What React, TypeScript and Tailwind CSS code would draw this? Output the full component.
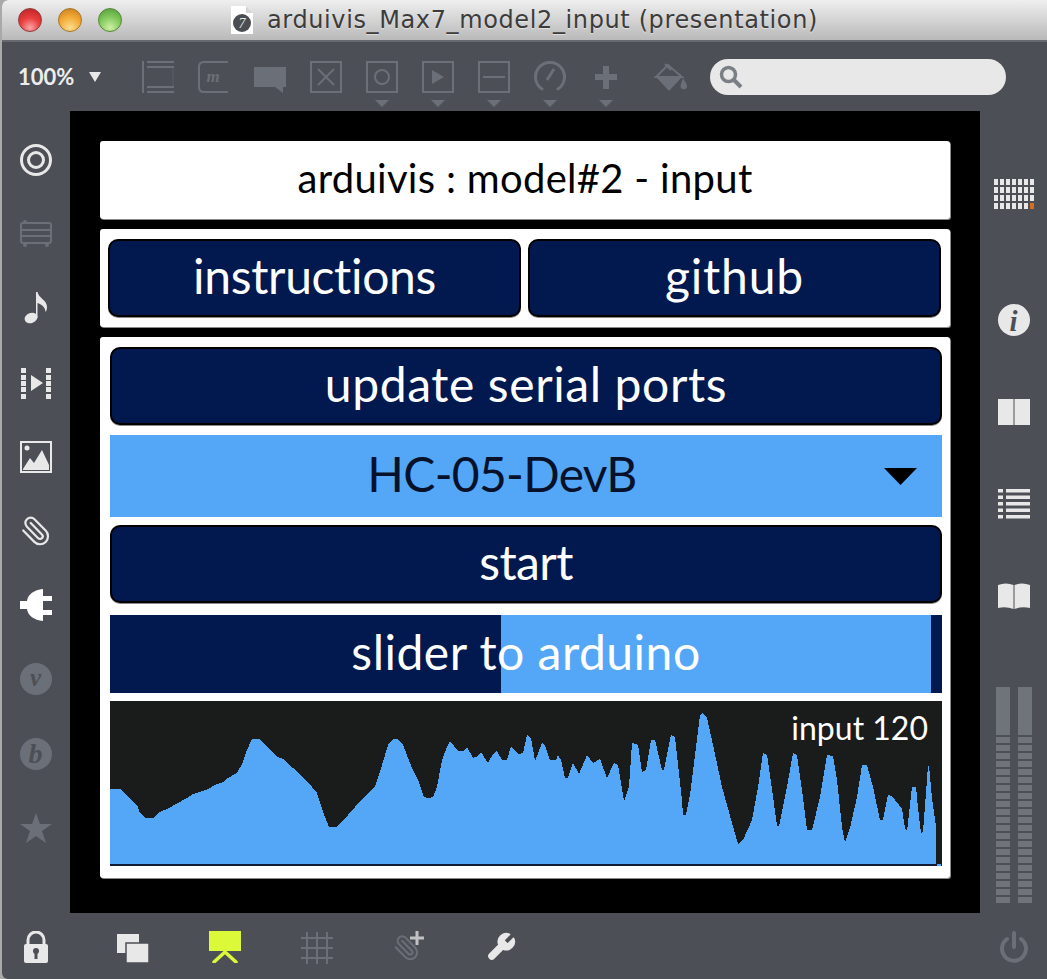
import React from "react";

const DIM = "#6b6f77";
const LIT = "#e8e8e8";
const SERIF = '"Liberation Serif", serif';

const wavePts: [number, number][] = [[0,88],[10,88],[18,96],[27,104],[30,112],[35,117],[43,117],[50,111],[57,108],[77,97],[83,93],[98,88],[105,84],[113,81],[118,77],[127,72],[133,61],[137,49],[142,38],[150,38],[157,46],[167,56],[173,58],[183,67],[192,76],[198,81],[207,92],[213,111],[219,126],[227,126],[238,114],[253,97],[265,86],[272,64],[278,44],[283,38],[288,38],[293,44],[302,67],[309,81],[314,96],[318,97],[323,96],[327,86],[332,59],[337,46],[340,40],[348,50],[353,50],[357,46],[363,57],[368,55],[371,51],[378,62],[383,53],[387,50],[392,59],[397,59],[401,45],[408,53],[413,52],[417,34],[421,37],[425,60],[432,42],[435,44],[440,59],[446,59],[448,54],[451,59],[455,77],[458,77],[463,62],[469,73],[477,54],[483,62],[490,58],[497,77],[504,62],[508,64],[514,100],[519,86],[522,42],[528,44],[532,71],[536,69],[541,39],[545,39],[552,69],[554,69],[561,34],[565,36],[572,99],[573,114],[576,114],[580,94],[590,14],[593,12],[597,17],[603,44],[612,86],[622,122],[628,143],[633,139],[642,119],[648,86],[653,52],[657,54],[661,81],[667,125],[669,125],[677,86],[683,52],[687,54],[692,89],[697,129],[702,129],[710,96],[717,54],[723,55],[727,79],[732,126],[735,142],[740,127],[747,96],[752,64],[757,64],[763,86],[770,119],[773,119],[778,94],[782,95],[792,108],[795,127],[797,130],[802,86],[806,86],[808,107],[811,132],[813,131],[818,65],[819,64],[822,97],[826,126],[826,163],[832,163]];
const wavePoints = "0,163 " + wavePts.map((p) => p.join(",")).join(" ");

const Ico = ({ w = 32, h = 32, children }: { w?: number; h?: number; children: React.ReactNode }) => (
  <svg width={w} height={h} viewBox={`0 0 ${w} ${h}`} className="block shrink-0">{children}</svg>
);

const FrameIco = ({ children }: { children?: React.ReactNode }) => (
  <Ico><rect x="1" y="1" width="30" height="30" fill="none" stroke={DIM} strokeWidth="2" />{children}</Ico>
);

const Caret = () => (
  <svg width="14" height="7" viewBox="0 0 14 7" className="block mt-[7px]"><polygon points="0,0 14,0 7,7" fill={DIM} /></svg>
);

const ClipPath = ({ color, sw = 2 }: { color: string; sw?: number }) => (
  <g transform="translate(32,0) scale(-1.33,1.33)" fill="none" stroke={color} strokeWidth={sw / 1.33} strokeLinecap="round" strokeLinejoin="round">
    <path d="m16 6-8.414 8.586a2 2 0 0 0 2.829 2.828l8.414-8.586a4 4 0 1 0-5.657-5.657l-8.379 8.551a6 6 0 1 0 8.485 8.485l8.379-8.551" />
  </g>
);

const toolbarIcons: React.ReactNode[] = [
  <Ico key="a"><path d="M1 0V32" stroke={DIM} strokeWidth="2" /><path d="M5 1H32M5 6H32M5 26H32M5 31H32" stroke={DIM} strokeWidth="2" /><path d="M31 6V26" stroke={DIM} strokeWidth="1" opacity="0.5" /></Ico>,
  <Ico key="b"><path d="M30 1H6Q1 1 1 6V26Q1 31 6 31H30" fill="none" stroke={DIM} strokeWidth="2" /><text x="15" y="21" textAnchor="middle" fontFamily={SERIF} fontSize="17" fontStyle="italic" fontWeight="700" fill={DIM}>m</text></Ico>,
  <Ico key="c"><polygon points="0,6 32,6 32,26 29,26 29,32 21,26 0,26" fill={DIM} /></Ico>,
  <FrameIco key="d"><path d="M8 8L24 24M24 8L8 24" stroke={DIM} strokeWidth="2" /></FrameIco>,
  <FrameIco key="e"><circle cx="16" cy="16" r="7" fill="none" stroke={DIM} strokeWidth="2" /></FrameIco>,
  <FrameIco key="f"><polygon points="10,9 22,16 10,23" fill={DIM} /></FrameIco>,
  <FrameIco key="g"><path d="M5 16H27" stroke={DIM} strokeWidth="2" /></FrameIco>,
  <Ico key="h"><path d="M8 28A14.5 14.5 0 1 1 24 28" fill="none" stroke={DIM} strokeWidth="3" strokeLinecap="round" /><path d="M13 19L20 8" stroke={DIM} strokeWidth="3" /></Ico>,
  <Ico key="i"><path d="M13 5H19V13H27V19H19V28H13V19H5V13H13Z" fill={DIM} /></Ico>,
];

const leftIcons: React.ReactNode[] = [
  <Ico key="1"><circle cx="16" cy="16" r="14.5" fill="none" stroke={LIT} strokeWidth="3" /><circle cx="16" cy="16" r="7.5" fill="none" stroke={LIT} strokeWidth="3" /></Ico>,
  <Ico key="2"><rect x="1" y="5" width="30" height="20" rx="2" fill="none" stroke={DIM} strokeWidth="2" /><path d="M1 12H31M1 18H31" stroke={DIM} strokeWidth="2" /><circle cx="5" cy="4" r="2" fill={DIM} /><circle cx="5" cy="27" r="2" fill={DIM} /><circle cx="27" cy="27" r="2" fill={DIM} /></Ico>,
  <Ico key="3"><ellipse cx="11" cy="26" rx="6.5" ry="5" transform="rotate(-20 11 26)" fill={LIT} /><path d="M16 26V0H17.5C18.5 6 27 8 27 15C27 17 26.5 19 25.5 20C25.5 15 21 12 17.5 11V26Z" fill={LIT} /></Ico>,
  <Ico key="4"><path d="M1 1h5v5h-5zM1 8h5v5h-5zM1 14h5v5h-5zM1 20h5v5h-5zM1 27h5v5h-5zM26 1h5v5h-5zM26 8h5v5h-5zM26 14h5v5h-5zM26 20h5v5h-5zM26 27h5v5h-5z" fill={LIT} /><polygon points="11,8 23,16 11,24" fill={LIT} /></Ico>,
  <Ico key="5"><rect x="1" y="1" width="30" height="30" fill="none" stroke={LIT} strokeWidth="2" /><circle cx="7" cy="7" r="2.5" fill={LIT} /><path d="M3 28L10 17L14 22L22 9L29 24V29H3Z" fill={LIT} /></Ico>,
  <Ico key="6"><ClipPath color={LIT} sw={2.2} /></Ico>,
  <Ico key="7"><path d="M0 12H7C8 5 14 1 23 0V7H32V12H23V21H32V26H23V32C14 31 8 27 7 20H0Z" fill="#ffffff" /></Ico>,
  <Ico key="8"><circle cx="16" cy="16" r="16" fill={DIM} /><text x="15.5" y="23" textAnchor="middle" fontFamily={SERIF} fontSize="25" fontStyle="italic" fontWeight="700" fill="#4c4f56">v</text></Ico>,
  <Ico key="9"><circle cx="16" cy="16" r="16" fill={DIM} /><text x="15.5" y="25" textAnchor="middle" fontFamily={SERIF} fontSize="28" fontStyle="italic" fontWeight="700" fill="#4c4f56">b</text></Ico>,
  <Ico key="10"><polygon points="16,1 20,12 32,12 22,19 26,31 16,24 6,31 10,19 0,12 12,12" fill={DIM} /></Ico>,
];

const NavyButton = ({ label, className, textClass }: { label: string; className: string; textClass: string }) => (
  <div className={`flex items-center justify-center rounded-[10px] border-2 border-black bg-[#02194f] text-white shadow-[0_1px_0_#8a8a8a] ${className}`}>
    <span className={`mb-[4px] leading-none ${textClass}`}>{label}</span>
  </div>
);

const Light = ({ bg, edge }: { bg: string; edge: string }) => (
  <div className={`h-[24px] w-[24px] rounded-full border ${edge} ${bg}`} />
);

export default function App() {
  const font = { fontFamily: '"Lato", "Open Sans", sans-serif' };
  return (
    <div className="h-[979px] w-[1047px] overflow-hidden bg-[#a9a9a9] pl-[2px]" style={font}>
      <div className="flex h-full flex-col overflow-hidden rounded-tl-[6px] rounded-bl-[6px] bg-[#4c4f56]">
        {/* title bar */}
        <div className="relative flex h-[42px] shrink-0 items-center border-b-2 border-[#666a6e] bg-gradient-to-b from-[#efefef] to-[#b9b9b9] pl-[16px]">
          <div className="flex gap-[16px]">
            <Light edge="border-[#8e3a3a]" bg="bg-[radial-gradient(circle_at_50%_85%,#f9a5a5_0%,#ea3f3f_45%,#b81f24_100%)]" />
            <Light edge="border-[#a5762a]" bg="bg-[radial-gradient(circle_at_50%_85%,#fbdc8f_0%,#f3aa35_50%,#c27a1e_100%)]" />
            <Light edge="border-[#55863a]" bg="bg-[radial-gradient(circle_at_50%_85%,#cff0a5_0%,#82c95b_50%,#4f9a3a_100%)]" />
          </div>
          <svg width="22" height="28" viewBox="0 0 22 28" className="ml-[109px] block shrink-0">
            <path d="M0 0H15L22 7V28H0Z" fill="#ffffff" />
            <path d="M15 0V7H22Z" fill="#d5d5d5" />
            <circle cx="11" cy="17" r="9" fill="#4a4d52" />
            <text x="11" y="22" textAnchor="middle" fontFamily={SERIF} fontSize="14" fontStyle="italic" fill="#e8e8e8">7</text>
          </svg>
          <span className="ml-[14px] whitespace-nowrap text-[24px] tracking-[0.62px] text-[#3c3c3c] [text-shadow:0_1px_1px_#ffffff80]" style={{ fontFamily: '"DejaVu Sans", sans-serif' }}>
            arduivis_Max7_model2_input (presentation)
          </span>
        </div>

        {/* toolbar */}
        <div className="flex h-[69px] shrink-0 items-start">
          <div className="flex w-[128px] items-center pl-[16px] pt-[21px]">
            <span className="text-[22px] font-bold leading-[28px] text-[#ededed]">100%</span>
            <svg width="12" height="10" viewBox="0 0 12 10" className="ml-[15px] block"><polygon points="0,0 12,0 6,10" fill={LIT} /></svg>
          </div>
          {toolbarIcons.map((icon, i) => (
            <div key={i} className="flex w-[56px] flex-col items-center pt-[19px]">
              {icon}
              {i >= 4 && <Caret />}
            </div>
          ))}
          <div className="flex w-[64px] justify-center pt-[21px] pl-[8px]">
            <svg width="33" height="29" viewBox="0 0 33 29" className="block">
              <path d="M14 2L2 14L15 28L28 14Z" fill={DIM} />
              <path d="M14 2L2 14L28 14Z" fill="#4c4f56" stroke={DIM} strokeWidth="2" />
              <path d="M11 1L17 7" stroke={DIM} strokeWidth="2" />
              <path d="M29 15C31 19 33 21 33 23A3.2 3.2 0 0 1 26.6 23C26.6 21 28 19 29 15Z" fill={DIM} />
            </svg>
          </div>
          <div className="ml-[12px] mt-[17px] flex h-[36px] w-[296px] items-center rounded-full bg-[#e8e8e8] pl-[8px]">
            <svg width="26" height="26" viewBox="0 0 26 26" className="block">
              <circle cx="10.5" cy="10.5" r="7" fill="none" stroke="#7a7e85" strokeWidth="3.5" />
              <path d="M15.5 15.5L23 23" stroke="#7a7e85" strokeWidth="4" />
            </svg>
          </div>
        </div>

        {/* middle */}
        <div className="flex h-[802px] shrink-0">
          <div className="flex w-[68px] shrink-0 flex-col items-center pt-[12px]">
            {leftIcons.map((icon, i) => (
              <div key={i} className="flex h-[74.2px] items-center justify-center">{icon}</div>
            ))}
          </div>

          {/* canvas */}
          <div className="flex w-[910px] shrink-0 flex-col gap-[10px] bg-black pl-[30px] pt-[30px]">
            <div className="flex h-[78px] w-[850px] items-center justify-center rounded-[3px] bg-white text-[40px] text-black shadow-[1px_1px_0_#8a8a8a]">
              <span className="mb-[4px] leading-none tracking-[0.3px]">arduivis : model#2 - input</span>
            </div>
            <div className="flex h-[98px] w-[850px] gap-[7px] rounded-[3px] bg-white pl-[8px] pt-[10px] shadow-[1px_1px_0_#8a8a8a]">
              <NavyButton label="instructions" className="h-[78px] w-[413px] text-[48px]" textClass="tracking-[-0.35px]" />
              <NavyButton label="github" className="h-[78px] w-[413px] text-[48px]" textClass="tracking-[0.8px]" />
            </div>
            <div className="flex h-[541px] w-[850px] flex-col rounded-[3px] bg-white pl-[10px] pt-[10px] shadow-[1px_1px_0_#8a8a8a]">
              <NavyButton label="update serial ports" className="h-[78px] w-[832px] text-[48px]" textClass="tracking-[0.6px]" />
              <div className="mt-[10px] flex h-[82px] w-[832px] items-center bg-[#54a7f7] text-[48px] text-[#07122a]">
                <span className="mb-[4px] flex-1 pl-[10px] text-center leading-none tracking-[-0.7px]">HC-05-DevB</span>
                <svg width="33" height="17" viewBox="0 0 33 17" className="mr-[25px] block shrink-0"><polygon points="0,0 33,0 16.5,17" fill="#000000" /></svg>
              </div>
              <NavyButton label="start" className="mt-[8px] h-[78px] w-[832px] text-[48px]" textClass="tracking-[-0.6px]" />
              <div className="relative mt-[12px] flex h-[78px] w-[832px]">
                <div className="w-[391px] bg-[#02194f]" />
                <div className="w-[430px] bg-[#54a7f7]" />
                <div className="w-[11px] bg-[#02194f]" />
                <div className="absolute inset-0 flex items-center justify-center pb-[4px] text-[48px] leading-none tracking-[0.5px] text-white">slider to arduino</div>
              </div>
              <div className="relative mt-[8px] h-[165px] w-[832px] bg-[#1a1b1b]">
                <svg width="832" height="165" viewBox="0 0 832 165" className="block" shapeRendering="crispEdges">
                  <polygon points={wavePoints} fill="#54a7f7" />
                  <rect x="0" y="163" width="832" height="2" fill="#101c33" />
                  <rect x="827" y="163" width="4" height="2" fill="#54a7f7" />
                </svg>
                <div className="absolute right-[14px] top-[7px] text-[32px] leading-[40px] text-white">input 120</div>
              </div>
            </div>
          </div>

          {/* right */}
          <div className="flex w-[67px] shrink-0 flex-col items-center">
            <div className="mt-[68px] w-[40px]">
              <svg width="40" height="30" viewBox="0 0 40 30" className="block" shapeRendering="crispEdges">
                {Array.from({ length: 28 }).map((_, i) => (
                  <rect key={i} x={(i % 7) * 6} y={Math.floor(i / 7) * 8} width="4" height="6" fill={i === 27 ? "#d96f1c" : LIT} />
                ))}
              </svg>
            </div>
            <div className="mt-[95px]">
              <Ico><circle cx="16" cy="16" r="16" fill={LIT} /><text x="15.5" y="27" textAnchor="middle" fontFamily={SERIF} fontSize="29" fontStyle="italic" fontWeight="700" fill="#4c4f56">i</text></Ico>
            </div>
            <div className="mt-[63px]">
              <Ico h={26}><rect x="0" y="0" width="15.5" height="26" fill={LIT} /><rect x="16.5" y="0" width="15.5" height="26" fill={LIT} /></Ico>
            </div>
            <div className="mt-[64px]">
              <Ico h={30}><path d="M0 0h5v3.5h-5zM8 0h24v3.5h-24zM0 6.5h5v3.5h-5zM8 6.5h24v3.5h-24zM0 13h5v3.5h-5zM8 13h24v3.5h-24zM0 19.5h5v3.5h-5zM8 19.5h24v3.5h-24zM0 26h5v3.5h-5zM8 26h24v3.5h-24z" fill={LIT} /></Ico>
            </div>
            <div className="mt-[64px]">
              <Ico h={26}><path d="M0 2Q8 -1 15.5 2V26Q8 23 0 25Z" fill={LIT} /><path d="M16.5 2Q24 -1 32 2V25Q24 23 16.5 26Z" fill={LIT} /></Ico>
            </div>
            <div className="mt-[78px] flex gap-[8px]">
              {[0, 1].map((c) => (
                <div key={c} className="flex w-[14px] flex-col gap-[2px]">
                  <div className="h-[48px] bg-[#6f737a]" />
                  {Array.from({ length: 21 }).map((_, i) => (
                    <div key={i} className="h-[6px] bg-[#6f737a]" />
                  ))}
                </div>
              ))}
            </div>
          </div>
        </div>

        {/* bottom */}
        <div className="flex h-[66px] items-start pt-[18px]">
          <div className="flex w-[68px] justify-center">
            <Ico w={26} h={32}><path d="M5 14V9A8 8 0 0 1 21 9V14" fill="none" stroke={LIT} strokeWidth="3" /><rect x="1" y="13" width="24" height="19" rx="2" fill={LIT} /><circle cx="13" cy="20" r="3" fill="#4c4f56" /><rect x="11.5" y="20" width="3" height="8" fill="#4c4f56" /></Ico>
          </div>
          <div className="ml-[17px] flex w-[92px] justify-center pt-[3px]">
            <Ico h={29}><rect x="0" y="0" width="22" height="19" fill={LIT} /><rect x="9" y="9" width="23" height="20" fill={LIT} stroke="#4c4f56" strokeWidth="1.5" /></Ico>
          </div>
          <div className="flex w-[92px] justify-center">
            <Ico h={32}><rect x="0" y="0" width="32" height="20" fill="#dcf939" /><path d="M16 21L5 31M16 21L27 31" stroke="#dcf939" strokeWidth="3.5" strokeLinecap="round" /></Ico>
          </div>
          <div className="flex w-[92px] justify-center pt-[1px]">
            <Ico><path d="M6 0V32M16 0V32M26 0V32M0 6H32M0 16H32M0 26H32" stroke={DIM} strokeWidth="2" /></Ico>
          </div>
          <div className="flex w-[92px] justify-center">
            <Ico><g transform="translate(0,3) scale(0.86)"><ClipPath color={DIM} sw={2.4} /></g><path d="M24 0V14M17 7H31" stroke={LIT} strokeOpacity="0.75" strokeWidth="3" /></Ico>
          </div>
          <div className="flex w-[92px] justify-center">
            <Ico>
              <g transform="scale(1.33)" fill={LIT} stroke={LIT} strokeWidth="1.2" strokeLinejoin="round">
                <path d="M14.7 6.3a1 1 0 0 0 0 1.4l1.6 1.6a1 1 0 0 0 1.4 0l3.77-3.77a6 6 0 0 1-7.94 7.94l-6.91 6.91a2.12 2.12 0 0 1-3-3l6.91-6.91a6 6 0 0 1 7.94-7.94l-3.76 3.76z" />
              </g>
            </Ico>
          </div>
          <div className="ml-[453px]">
            <Ico w={28} h={32}><path d="M7 8A12 12 0 1 0 21 8" fill="none" stroke={DIM} strokeWidth="4" strokeLinecap="round" /><path d="M14 2V16" stroke={DIM} strokeWidth="4" strokeLinecap="round" /></Ico>
          </div>
        </div>
      </div>
    </div>
  );
}
